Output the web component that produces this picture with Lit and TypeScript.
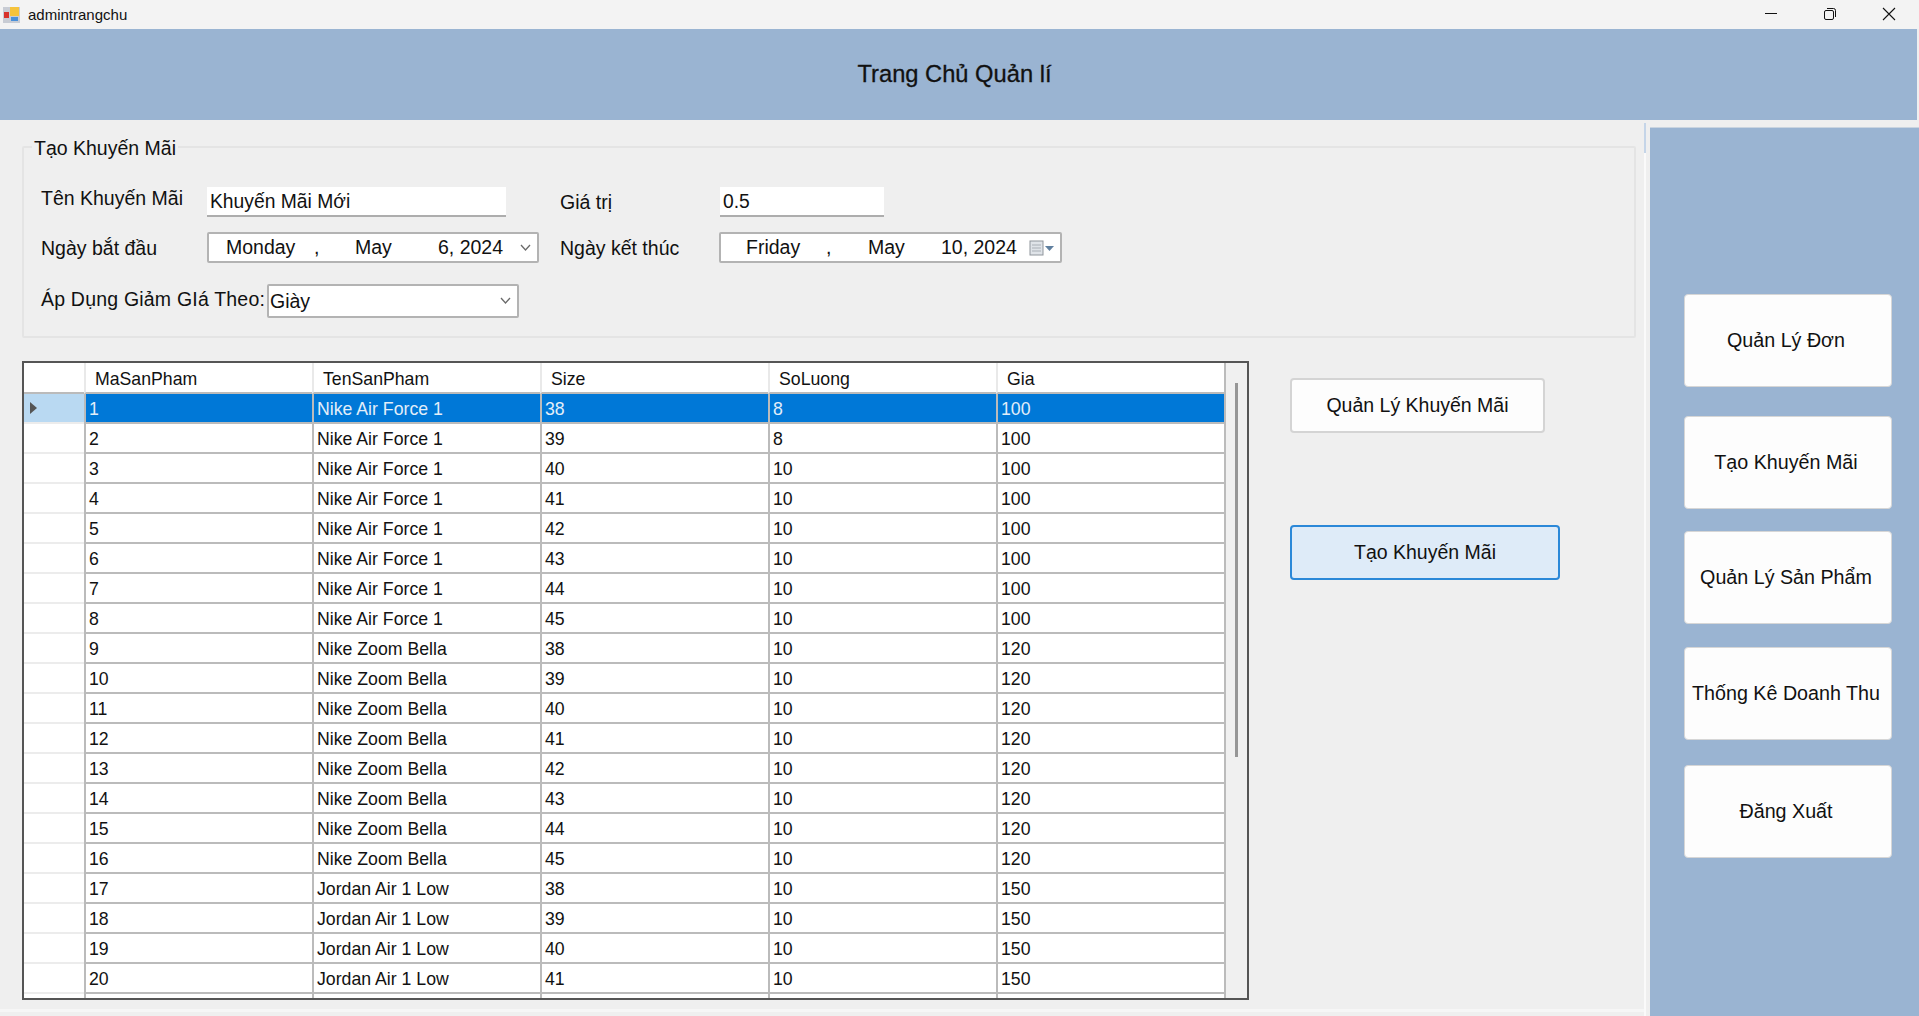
import { LitElement, css, html, svg } from 'lit'
import { customElement } from 'lit/decorators.js'

interface Row {
	id: number
	name: string
	size: number | ''
	qty: number | ''
	price: number | ''
}

const SIZES = [38, 39, 40, 41, 42, 43, 44, 45]

function buildRows(): Row[] {
	const rows: Row[] = []
	SIZES.forEach((size, i) => rows.push({ id: i + 1, name: 'Nike Air Force 1', size, qty: i < 2 ? 8 : 10, price: 100 }))
	SIZES.forEach((size, i) => rows.push({ id: i + 9, name: 'Nike Zoom Bella', size, qty: 10, price: 120 }))
	SIZES.slice(0, 4).forEach((size, i) => rows.push({ id: i + 17, name: 'Jordan Air 1 Low', size, qty: 10, price: 150 }))
	return rows
}

const chevron = svg`<polyline points="1,1 5.5,6 10,1" fill="none" stroke="#6a6a6a" stroke-width="1.3"></polyline>`

@customElement('app-root')
export class AppRoot extends LitElement {
	static styles = css`
		:host {
			display: flex;
			flex-direction: column;
			width: 1919px;
			height: 1016px;
			overflow: hidden;
			background: #efefef;
			color: #111;
			font-family: 'Liberation Sans', Arial, sans-serif;
			font-size: 19.5px;
		}

		/* title bar */
		.titlebar {
			flex: none;
			display: flex;
			align-items: center;
			height: 29px;
			background: #f3f3f3;
			font-size: 15px;
		}

		.app-icon {
			margin: 0 7px 0 3px;
		}

		.win-controls {
			display: flex;
			margin-left: auto;
		}

		.win-controls svg {
			display: block;
			width: 59px;
			height: 29px;
		}

		.header {
			flex: none;
			display: flex;
			align-items: center;
			justify-content: center;
			width: 1917px;
			height: 91px;
			padding-right: 8px;
			box-sizing: border-box;
			background: #9ab4d2;
			font-size: 23.7px;
			-webkit-text-stroke: 0.3px #111;
		}

		.body {
			flex: 1;
			display: flex;
			min-height: 0;
		}

		.main {
			flex: none;
			width: 1644px;
			height: 892px;
			padding: 15px 8px 0 22px;
			box-sizing: border-box;
			border-bottom: 3px solid #f6f6f6;
		}

		/* group box */
		fieldset {
			height: 203px;
			margin: 0;
			padding: 0;
			box-sizing: border-box;
			border: 2px solid #e4e4e4;
			border-radius: 2px;
		}

		legend {
			margin-left: 8px;
			padding: 2px 2px 0;
			line-height: 22px;
			font-size: 19.5px;
		}

		.form-grid {
			display: grid;
			grid-template-columns: 166px 353px 160px auto;
			grid-template-rows: 30px 31px;
			row-gap: 15px;
			margin: 28px 0 0 17px;
		}

		.label {
			line-height: 24px;
			white-space: nowrap;
		}

		.label.up {
			margin-top: -1px;
		}

		.label.mid {
			margin-top: 3px;
		}

		.label.low {
			margin-top: 4px;
		}

		.input {
			display: flex;
			align-items: center;
			height: 30px;
			padding: 2px 0 0 3px;
			box-sizing: border-box;
			background: #fff;
			border-bottom: 2px solid #adadad;
			font-size: 19.3px;
		}

		.input.name {
			width: 299px;
		}

		.input.value {
			width: 164px;
		}

		.date {
			display: flex;
			align-items: center;
			height: 31px;
			box-sizing: border-box;
			background: #fff;
			border: 2px solid #b3b3b3;
			border-radius: 2px;
			white-space: nowrap;
		}

		.date span {
			flex: none;
		}

		.date.start {
			width: 332px;
			padding-left: 17px;
		}

		.date.start .p1 { width: 88px; }
		.date.start .p2 { width: 41px; }
		.date.start .p3 { width: 83px; }

		.date.end {
			width: 343px;
			margin-left: -1px;
			padding-left: 25px;
		}

		.date.end .p1 { width: 80px; }
		.date.end .p2 { width: 42px; }
		.date.end .p3 { width: 73px; }

		.date svg,
		.combo svg {
			flex: none;
			margin-left: auto;
			margin-right: 6px;
		}

		.date.end svg {
			margin-right: 5px;
		}

		.combo-row {
			display: flex;
			align-items: center;
			margin: 21px 0 0 17px;
		}

		.combo-row .label {
			width: 226px;
			margin-top: -5px;
			letter-spacing: 0.2px;
		}

		.combo {
			display: flex;
			align-items: center;
			width: 252px;
			height: 34px;
			padding-left: 1px;
			box-sizing: border-box;
			background: #fff;
			border: 2px solid #b3b3b3;
			border-radius: 2px;
		}

		/* table and action buttons */
		.lower {
			display: flex;
			margin-top: 23px;
		}

		.grid-wrap {
			flex: none;
			display: flex;
			width: 1227px;
			height: 639px;
			box-sizing: border-box;
			overflow: hidden;
			border: 2px solid #555;
			background: #f0f0f0;
		}

		table {
			flex: none;
			width: 1202px;
			align-self: flex-start;
			table-layout: fixed;
			border-collapse: separate;
			border-spacing: 0;
			background: #fff;
			font-size: 17.7px;
			color: #111;
		}

		th,
		td {
			height: 30px;
			padding: 2px 0 0 3px;
			box-sizing: border-box;
			text-align: left;
			font-weight: 400;
			white-space: nowrap;
			border-left: 2px solid #bbb;
			border-bottom: 2px solid #bbb;
		}

		th {
			height: 31px;
			padding: 3px 0 0 9px;
			border-left-color: #e9e9e9;
		}

		th.corner,
		td.head {
			padding: 0;
			border-left: 0;
			border-bottom-color: #ececec;
		}

		th.corner {
			border-bottom-color: #bbb;
		}

		tr.selected td {
			background: #0078d7;
			color: #e3eef9;
		}

		tr.selected td.head {
			background: #b9d9f2;
		}

		td.head svg {
			display: block;
			margin-left: 6px;
		}

		.last {
			border-right: 2px solid #bbb;
		}

		.scroll {
			flex: 1;
			padding: 20px 0 0 9px;
		}

		.thumb {
			width: 3px;
			height: 374px;
			background: #969696;
		}

		.actions {
			flex: none;
			display: flex;
			flex-direction: column;
			align-items: flex-start;
			padding: 17px 0 0 41px;
		}

		.btn {
			display: flex;
			align-items: center;
			justify-content: center;
			box-sizing: border-box;
			border-radius: 4px;
			background: #fdfdfd;
			border: 2px solid #d4d4d4;
		}

		.btn.manage {
			width: 255px;
			height: 55px;
		}

		.btn.create {
			width: 270px;
			height: 55px;
			margin-top: 92px;
			background: #deebf8;
			border-color: #2b88d8;
		}

		/* splitter + side panel */
		.splitter {
			flex: none;
			width: 2px;
			margin: 3px 4px 0 0;
			background: linear-gradient(#c5d5e8 0 30px, #fafafa 30px);
		}

		.side {
			flex: 1;
			display: flex;
			flex-direction: column;
			margin-top: 7px;
			padding: 166px 0 0 34px;
			background: #9ab4d2;
			border-top: 1px solid #c9d4e0;
		}

		.nav {
			display: flex;
			align-items: center;
			justify-content: center;
			width: 208px;
			height: 93px;
			padding: 0 4px 1px 0;
			box-sizing: border-box;
			border: 1px solid #d6d6d6;
			border-radius: 4px;
			background: #fdfdfd;
			font-size: 19.7px;
			white-space: nowrap;
		}

		.nav:nth-child(2) { margin-top: 29px; }
		.nav:nth-child(3) { margin-top: 22px; }
		.nav:nth-child(4) { margin-top: 23px; }
		.nav:nth-child(5) { margin-top: 25px; }
	`

	private rows = buildRows()

	private renderTitlebar() {
		return html`
			<div class="titlebar">
				<svg class="app-icon" width="18" height="17" viewBox="0 0 18 17">
					<rect x="0" y="1" width="17" height="16" fill="#c8ccd4"></rect>
					<rect x="1" y="6" width="5" height="6" fill="#d8322a"></rect>
					<rect x="7" y="1" width="9" height="9" fill="#f5c33b"></rect>
					<rect x="8" y="11" width="7" height="4" fill="#4a90d9"></rect>
				</svg>
				<span>admintrangchu</span>
				<div class="win-controls">
					<svg viewBox="0 0 59 29">
						<line x1="23" x2="35" y1="13.5" y2="13.5" stroke="#111" stroke-width="1"></line>
					</svg>
					<svg viewBox="0 0 59 29">
						<rect x="23.5" y="10.5" width="9" height="9" rx="1.5" fill="none" stroke="#111"></rect>
						<path d="M26 8.5h6.5a2 2 0 0 1 2 2V17" fill="none" stroke="#111"></path>
					</svg>
					<svg viewBox="0 0 59 29">
						<path d="M23 8l12 12M35 8L23 20" fill="none" stroke="#111" stroke-width="1.1"></path>
					</svg>
				</div>
			</div>
		`
	}

	private renderForm() {
		return html`
			<fieldset>
				<legend>Tạo Khuyến Mãi</legend>
				<div class="form-grid">
					<div class="label up">Tên Khuyến Mãi</div>
					<div class="input name">Khuyến Mãi Mới</div>
					<div class="label mid">Giá trị</div>
					<div class="input value">0.5</div>

					<div class="label low">Ngày bắt đầu</div>
					<div class="date start">
						<span class="p1">Monday</span><span class="p2">,</span><span class="p3">May</span><span>6, 2024</span>
						<svg width="11" height="8" viewBox="0 0 11 8">${chevron}</svg>
					</div>
					<div class="label low">Ngày kết thúc</div>
					<div class="date end">
						<span class="p1">Friday</span><span class="p2">,</span><span class="p3">May</span><span>10, 2024</span>
						<svg width="26" height="18" viewBox="0 0 26 18">
							<rect x="1" y="2" width="13" height="14" fill="#dfe3e8" stroke="#8f959c"></rect>
							<path d="M3 6h9M3 9h9M3 12h9" stroke="#a9afb6"></path>
							<path d="M16 7h9l-4.5 5z" fill="#5f7f9f"></path>
						</svg>
					</div>
				</div>
				<div class="combo-row">
					<div class="label">Áp Dụng Giảm GIá Theo:</div>
					<div class="combo">
						Giày
						<svg width="11" height="8" viewBox="0 0 11 8">${chevron}</svg>
					</div>
				</div>
			</fieldset>
		`
	}

	private renderTable() {
		return html`
			<div class="grid-wrap">
				<table>
					<colgroup>
						<col style="width:60px" />
						<col style="width:228px" />
						<col style="width:228px" />
						<col style="width:228px" />
						<col style="width:228px" />
						<col style="width:230px" />
					</colgroup>
					<thead>
						<tr>
							<th class="corner"></th>
							<th>MaSanPham</th>
							<th>TenSanPham</th>
							<th>Size</th>
							<th>SoLuong</th>
							<th class="last">Gia</th>
						</tr>
					</thead>
					<tbody>
						${this.rows.map(
							(r, i) => html`
								<tr class=${i === 0 ? 'selected' : ''}>
									<td class="head">
										${i === 0
											? html`<svg width="8" height="12" viewBox="0 0 8 12"><path d="M0 0l7 6-7 6z" fill="#555"></path></svg>`
											: ''}
									</td>
									<td>${r.id}</td>
									<td>${r.name}</td>
									<td>${r.size}</td>
									<td>${r.qty}</td>
									<td class="last">${r.price}</td>
								</tr>
							`,
						)}
						<tr>
							<td class="head"></td>
							<td></td>
							<td></td>
							<td></td>
							<td></td>
							<td class="last"></td>
						</tr>
					</tbody>
				</table>
				<div class="scroll"><div class="thumb"></div></div>
			</div>
		`
	}

	render() {
		return html`
			${this.renderTitlebar()}
			<div class="header">Trang Chủ Quản lí</div>
			<div class="body">
				<div class="main">
					${this.renderForm()}
					<div class="lower">
						${this.renderTable()}
						<div class="actions">
							<div class="btn manage">Quản Lý Khuyến Mãi</div>
							<div class="btn create">Tạo Khuyến Mãi</div>
						</div>
					</div>
				</div>
				<div class="splitter"></div>
				<div class="side">
					<div class="nav">Quản Lý Đơn</div>
					<div class="nav">Tạo Khuyến Mãi</div>
					<div class="nav">Quản Lý Sản Phẩm</div>
					<div class="nav">Thống Kê Doanh Thu</div>
					<div class="nav">Đăng Xuất</div>
				</div>
			</div>
		`
	}
}
